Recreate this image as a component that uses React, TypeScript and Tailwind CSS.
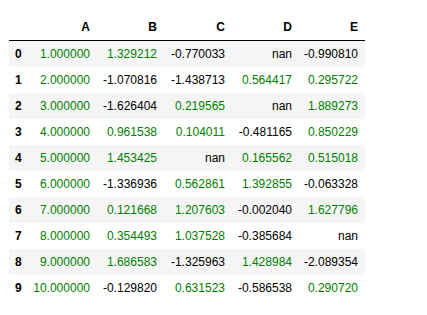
import React from "react";

const rows: string[][] = [
  ["1.000000", "1.329212", "-0.770033", "nan", "-0.990810"],
  ["2.000000", "-1.070816", "-1.438713", "0.564417", "0.295722"],
  ["3.000000", "-1.626404", "0.219565", "nan", "1.889273"],
  ["4.000000", "0.961538", "0.104011", "-0.481165", "0.850229"],
  ["5.000000", "1.453425", "nan", "0.165562", "0.515018"],
  ["6.000000", "-1.336936", "0.562861", "1.392855", "-0.063328"],
  ["7.000000", "0.121668", "1.207603", "-0.002040", "1.627796"],
  ["8.000000", "0.354493", "1.037528", "-0.385684", "nan"],
  ["9.000000", "1.686583", "-1.325963", "1.428984", "-2.089354"],
  ["10.000000", "-0.129820", "0.631523", "-0.586538", "0.290720"],
];

const headers = ["A", "B", "C", "D", "E"];
const widths = ["w-[68px]", "w-[67px]", "w-[68px]", "w-[67px]", "w-[66px]"];

export default function App() {
  return (
    <div
      className="w-[427px] h-[315px] bg-white pt-[14px] pl-[9px] text-[12px] text-black"
      style={{ fontFamily: '"Liberation Sans", Arial, sans-serif' }}
    >
      <div className="w-[356px] flex flex-col">
        <div className="flex h-[26px] items-center border-b border-black box-content">
          <div className="w-[20px]" />
          {headers.map((h, i) => (
            <div key={h} className={`${widths[i]} text-right pr-[7px] font-bold`}>
              {h}
            </div>
          ))}
        </div>
        {rows.map((r, ri) => (
          <div
            key={ri}
            className={
              ri % 2 === 0
                ? "flex h-[26px] items-center bg-[#f5f5f5]"
                : "flex h-[26px] items-center bg-white"
            }
          >
            <div className="w-[20px] pl-[6px] font-bold">{ri}</div>
            {r.map((v, ci) => (
              <div
                key={ci}
                className={`${widths[ci]} text-right pr-[7px] ${
                  v === "nan" || v.startsWith("-") ? "text-black" : "text-[#008000]"
                }`}
              >
                {v}
              </div>
            ))}
          </div>
        ))}
      </div>
    </div>
  );
}
